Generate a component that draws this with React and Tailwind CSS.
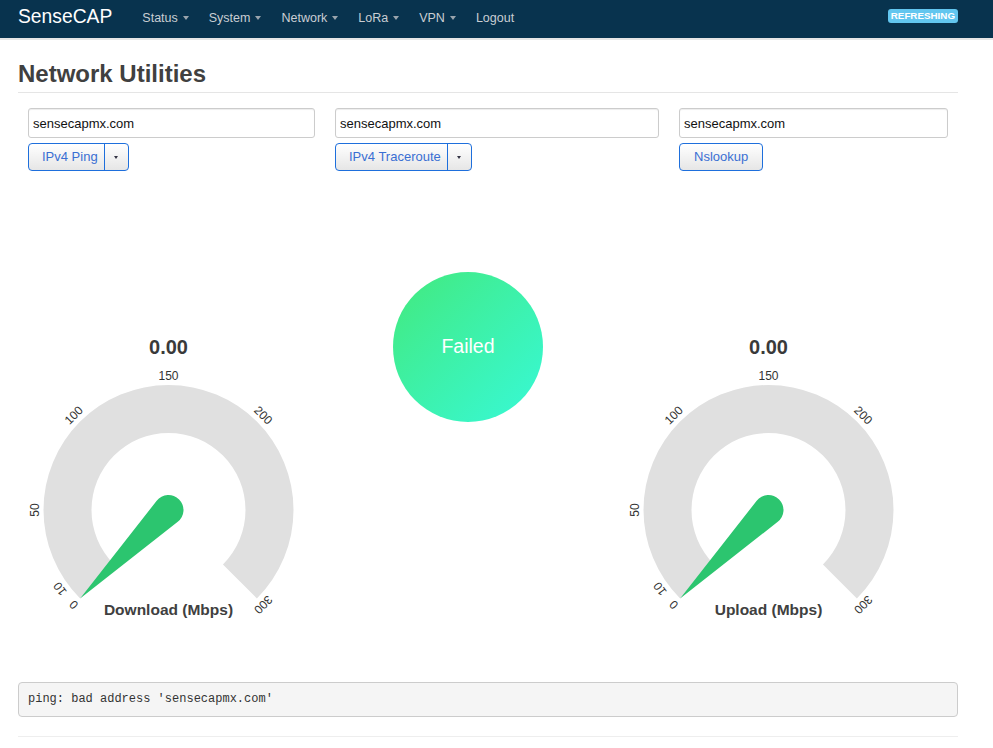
import React from "react";

const CX = 150.5;
const CY = 180;
const RO = 125;
const RI = 77;
const RL = 134;

function pt(r, deg) {
  const t = (deg * Math.PI) / 180;
  return [CX + r * Math.sin(t), CY - r * Math.cos(t)];
}

function arcPath() {
  const [ox1, oy1] = pt(RO, -135);
  const [ox2, oy2] = pt(RO, 135);
  const [ix2, iy2] = pt(RI, 135);
  const [ix1, iy1] = pt(RI, -135);
  return `M${ox1},${oy1} A${RO},${RO} 0 1 1 ${ox2},${oy2} L${ix2},${iy2} A${RI},${RI} 0 1 0 ${ix1},${iy1} Z`;
}

function needlePath(value) {
  const deg = -135 + value * 0.9;
  const [tx, ty] = pt(RO, deg);
  const rn = 15;
  const phi = Math.atan2(ty - CY, tx - CX);
  const a = Math.acos(rn / RO);
  const p1 = [CX + rn * Math.cos(phi + a), CY + rn * Math.sin(phi + a)];
  const p2 = [CX + rn * Math.cos(phi - a), CY + rn * Math.sin(phi - a)];
  return `M${tx},${ty} L${p1[0]},${p1[1]} A${rn},${rn} 0 1 1 ${p2[0]},${p2[1]} Z`;
}

const TICKS = [0, 10, 50, 100, 150, 200, 300];

function Gauge({ label }) {
  return (
    <svg width="300" height="300" viewBox="0 0 300 300">
      <text x={CX} y="24" textAnchor="middle" fontSize="20" fontWeight="bold" fill="#3a3a3a">
        0.00
      </text>
      <path d={arcPath()} fill="#e0e0e0" />
      {TICKS.map((v) => {
        const deg = -135 + v * 0.9;
        const [x, y] = pt(RL, deg);
        return (
          <text
            key={v}
            x={x}
            y={y}
            textAnchor="middle"
            dominantBaseline="central"
            fontSize="12"
            fill="#333"
            transform={`rotate(${deg} ${x} ${y})`}
          >
            {v}
          </text>
        );
      })}
      <path d={needlePath(0)} fill="#2cc56f" />
      <text x={CX} y="285" textAnchor="middle" fontSize="15.5" fontWeight="bold" fill="#404040">
        {label}
      </text>
    </svg>
  );
}

function NavItem({ text, caret = true }) {
  return (
    <div className="flex items-center text-[12.5px] text-[#c9ced3]">
      <span>{text}</span>
      {caret && (
        <span className="ml-[5px] inline-block w-0 h-0 border-t-[4px] border-x-[3.5px] border-x-transparent border-t-[#9aa4ad]" />
      )}
    </div>
  );
}

function SplitButton({ text }) {
  return (
    <div className="inline-flex h-[28px] border border-[#1e6fdc] rounded-[4px] bg-linear-to-b from-white to-[#e6e6e6] text-[13px] text-[#3a6fd3]">
      <div className="flex items-center pl-[13px] pr-[6px]">{text}</div>
      <div className="flex items-center justify-center w-[24px] border-l border-[#1e6fdc]">
        <span className="inline-block w-0 h-0 border-t-[3px] border-x-[2.5px] border-x-transparent border-t-[#334]" />
      </div>
    </div>
  );
}

function Field() {
  return (
    <input
      readOnly
      value="sensecapmx.com"
      className="w-full h-[30px] border border-[#ccc] rounded-[3px] px-[4px] text-[13px] text-[#111] bg-white shadow-[inset_0_1px_1px_rgba(0,0,0,0.075)] outline-none"
    />
  );
}

export default function App() {
  return (
    <div className="min-h-[748px] bg-white font-['Liberation_Sans',Arial,sans-serif]">
      <div className="h-[40px] bg-[#08334e] border-b-2 border-[#e6e6e6]">
        <div className="w-[940px] ml-[18px] h-[38px] flex items-center">
          <div className="text-[19.3px] text-white pb-[3px]">SenseCAP</div>
          <div className="ml-[30px] flex items-center gap-[20px] pb-[2px]">
            <NavItem text="Status" />
            <NavItem text="System" />
            <NavItem text="Network" />
            <NavItem text="LoRa" />
            <NavItem text="VPN" />
            <NavItem text="Logout" caret={false} />
          </div>
          <div className="ml-auto self-start mt-[9px] h-[14px] px-[3px] rounded-[3px] bg-[#62c6ef] text-white text-[9.8px] font-bold leading-[14px]">
            REFRESHING
          </div>
        </div>
      </div>

      <div className="w-[940px] ml-[18px]">
        <h2 className="mt-[21px] text-[24px] leading-[26px] font-bold text-[#404040] pb-[5px] border-b border-[#e5e5e5]">
          Network Utilities
        </h2>

        <div className="mt-[15px] ml-[10px] grid grid-cols-[287px_324px_269px] gap-x-[20px]">
          <div className="flex flex-col items-start gap-[5px]">
            <Field />
            <SplitButton text="IPv4 Ping" />
          </div>
          <div className="flex flex-col items-start gap-[5px]">
            <Field />
            <SplitButton text="IPv4 Traceroute" />
          </div>
          <div className="flex flex-col items-start gap-[5px]">
            <Field />
            <div className="inline-flex items-center h-[28px] px-[14px] border border-[#1e6fdc] rounded-[4px] bg-linear-to-b from-white to-[#e6e6e6] text-[13px] text-[#3a6fd3]">
              Nslookup
            </div>
          </div>
        </div>

        <div className="mt-[101px] flex items-start">
          <div className="w-[300px] pt-[58px]">
            <Gauge label="Download (Mbps)" />
          </div>
          <div className="w-[300px] flex justify-center">
            <div className="w-[150px] h-[150px] rounded-full bg-linear-to-br from-[#43e97b] to-[#38f9d7] flex items-center justify-center text-white text-[19.5px]">
              Failed
            </div>
          </div>
          <div className="w-[300px] pt-[58px]">
            <Gauge label="Upload (Mbps)" />
          </div>
        </div>

        <pre className="mt-[52px] border border-[#ccc] rounded-[4px] bg-[#f5f5f5] px-[9px] py-[9px] text-[12px] leading-[15px] text-[#333] font-['Liberation_Mono',monospace]">
          ping: bad address 'sensecapmx.com'
        </pre>

        <div className="mt-[19px] border-t border-[#eee]" />
      </div>
    </div>
  );
}
